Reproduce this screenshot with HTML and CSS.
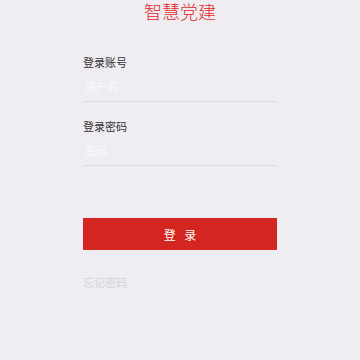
FILE: index.html
```html
<!DOCTYPE html>
<html lang="zh">
<head>
    <meta charset="UTF-8">
    <title>智慧党建</title>
    <link rel="stylesheet" href="styles.css">
</head>
<body>
<div class="login">
    <h1 class="login__title">智慧党建</h1>
    <div class="login__form">
        <div class="field">
            <label class="field__label" for="account">登录账号</label>
            <input type="text" id="account" class="field__input" placeholder="用户名">
        </div>
        <div class="field">
            <label class="field__label" for="password">登录密码</label>
            <input type="password" id="password" class="field__input" placeholder="密码">
        </div>
        <button type="button" class="login__button">登 录</button>
        <a class="login__forget">忘记密码</a>
    </div>
</div>
</body>
</html>
```
FILE: styles.css
```css
html, body {
    margin: 0;
    padding: 0;
    background-color: #efedf2;
    font-family: "Noto Sans CJK SC", "Noto Sans", sans-serif;
}

.login {
    width: 360px;
    height: 360px;
}

.login__title {
    margin: 0;
    padding-top: 0;
    text-align: center;
    font-size: 18px;
    font-weight: 300;
    line-height: 22px;
    color: #e0262c;
}

.login__form {
    width: 194px;
    margin: 0 0 0 83px;
    padding-top: 32px;
}

.field {
    display: flex;
    flex-direction: column;
    margin-bottom: 16px;
}

.field__label {
    font-size: 11px;
    line-height: 16px;
    color: #333;
}

.field__input {
    border: none;
    border-bottom: 1px solid #dcdadf;
    background: transparent;
    outline: none;
    padding: 0 2px;
    margin: 0;
    height: 31px;
    font-size: 11px;
    font-family: inherit;
}

.field__input::placeholder {
    color: #fafafa;
}

.login__button {
    display: block;
    width: 194px;
    height: 32px;
    margin-top: 52px;
    border: none;
    border-radius: 0;
    background-color: #d42620;
    color: #fff;
    font-size: 12px;
    font-family: inherit;
    letter-spacing: 3px;
    text-indent: 3px;
}

.login__forget {
    display: block;
    margin-top: 24px;
    font-size: 11px;
    line-height: 16px;
    color: #d6d4d8;
}
```
